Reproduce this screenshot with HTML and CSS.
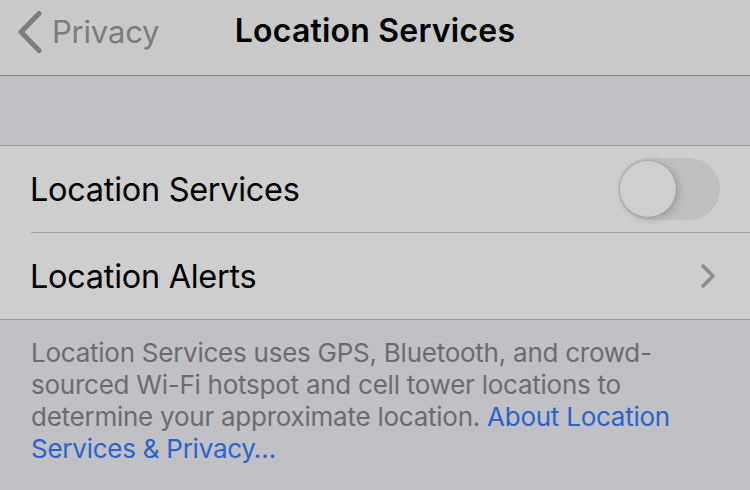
FILE: index.html
```html
<!DOCTYPE html>
<html>
<head>
<meta charset="utf-8">
<link rel="stylesheet" href="styles.css">
</head>
<body>
<div class="screen">
  <header class="navbar">
    <div class="back">
      <svg class="back-chevron" width="28" height="44" viewBox="0 0 28 44"><path d="M23 3.5 L5 22 L23 40.5" fill="none" stroke="#7c7c7c" stroke-width="5" stroke-linecap="round" stroke-linejoin="round"/></svg>
      <span class="back-label">Privacy</span>
    </div>
    <div class="title">Location Services</div>
  </header>
  <div class="spacer"></div>
  <section class="group">
    <div class="row">
      <span class="row-label">Location Services</span>
      <div class="toggle"><div class="knob"></div></div>
    </div>
    <div class="row">
      <span class="row-label">Location Alerts</span>
      <svg class="chevron" width="18" height="28" viewBox="0 0 18 28"><path d="M4 4 L14 14 L4 24" fill="none" stroke="#8f8f8f" stroke-width="3.8" stroke-linecap="round" stroke-linejoin="round"/></svg>
    </div>
  </section>
  <p class="footer">Location Services uses GPS, Bluetooth, and crowd-sourced Wi-Fi hotspot and cell tower locations to determine your approximate location. <span class="link">About Location Services &amp; Privacy…</span></p>
</div>
</body>
</html>
```
FILE: styles.css
```css
html, body {
  margin: 0;
  padding: 0;
}
body {
  width: 750px;
  height: 490px;
  overflow: hidden;
  background: #c1c0c5;
  font-family: Inter, "Noto Sans", sans-serif;
}
.screen {
  display: flex;
  flex-direction: column;
}
.navbar {
  height: 75px;
  background: #c9c9c9;
  border-bottom: 1px solid #838383;
  display: flex;
  align-items: flex-start;
  position: relative;
}
.back {
  display: flex;
  align-items: center;
  padding-left: 16px;
  padding-top: 9px;
  gap: 8px;
  color: #7c7c7c;
}
.back-label {
  font-size: 31px;
  letter-spacing: -0.2px;
  line-height: 44px;
  margin-top: 1px;
}
.title {
  position: absolute;
  left: 0;
  right: 0;
  top: 9px;
  text-align: center;
  line-height: 44px;
  font-size: 32px;
  font-weight: 600;
  color: #000;
  letter-spacing: 0.2px;
  pointer-events: none;
}
.spacer {
  height: 69px;
  border-bottom: 1px solid #9a9a9a;
}
.group {
  background: #cecece;
  border-bottom: 1px solid #9a9a9a;
}
.row {
  height: 86px;
  display: flex;
  align-items: center;
  justify-content: space-between;
  margin-left: 31px;
  padding-right: 30px;
  box-sizing: border-box;
}
.row + .row {
  border-top: 1px solid #a0a0a0;
  height: 87px;
  padding-right: 33px;
}
.row-label {
  font-size: 32.5px;
  color: #000;
  letter-spacing: -0.3px;
  margin-left: -1px;
}
.toggle {
  width: 102px;
  height: 62px;
  border-radius: 31px;
  background: #c0c0c0;
  position: relative;
}
.knob {
  position: absolute;
  left: 2px;
  top: 3px;
  width: 56px;
  height: 56px;
  border-radius: 50%;
  background: #cfcfcf;
  box-shadow: 0 0 0 1px rgba(0,0,0,0.06), 3px 2px 8px rgba(0,0,0,0.18);
}
.footer {
  margin: 0;
  padding: 17px 30px 0 31px;
  font-size: 26px;
  line-height: 32px;
  color: #6c6c70;
  letter-spacing: -0.25px;
}
.link {
  color: #2d62c9;
}
```
